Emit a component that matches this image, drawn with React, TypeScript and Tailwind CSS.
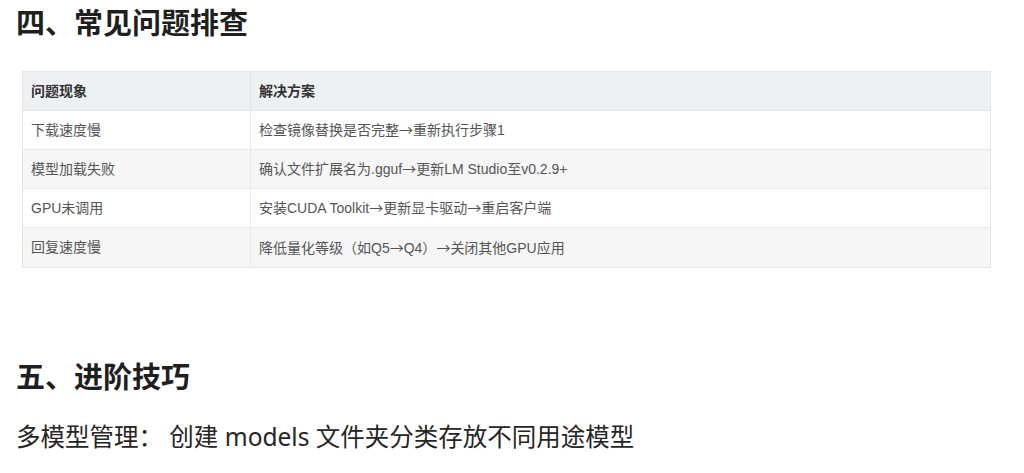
import React from 'react';

const rows = [
  { issue: '下载速度慢', fix: '检查镜像替换是否完整→重新执行步骤1' },
  { issue: '模型加载失败', fix: '确认文件扩展名为.gguf→更新LM Studio至v0.2.9+' },
  { issue: 'GPU未调用', fix: '安装CUDA Toolkit→更新显卡驱动→重启客户端' },
  { issue: '回复速度慢', fix: '降低量化等级（如Q5→Q4）→关闭其他GPU应用' },
];

const tableFont = { fontFamily: '"Liberation Sans", "Noto Sans CJK SC", sans-serif' };
const bodyFont = { fontFamily: '"Noto Sans", "Noto Sans CJK SC", sans-serif' };
const arrowFont = { fontFamily: '"Noto Sans CJK SC", sans-serif' };

// arrows look like the CJK font's glyph in the original, not Arial's
function WithArrows({ text }: { text: string }) {
  const parts = text.split('→');
  return (
    <>
      {parts.map((p, i) => (
        <React.Fragment key={i}>
          {p}
          {i < parts.length - 1 && <span style={arrowFont}>→</span>}
        </React.Fragment>
      ))}
    </>
  );
}

export default function App() {
  return (
    <div className="w-[1024px] h-[473px] overflow-hidden bg-white px-4" style={bodyFont}>
      <h2 className="h-[46px] leading-[46px] text-[29px] font-bold text-[#1f1f1f]">四、常见问题排查</h2>

      {/* Troubleshooting table */}
      <div className="mt-[25px] ml-[6px] w-[969px] border border-[#e4e6e8] text-[14px]" style={tableFont}>
        <div className="flex h-[39px] bg-[#edf1f4] border-b border-[#e2e5e8] font-bold text-[#333]">
          <div className="w-[228px] pl-2 flex items-center border-r border-[#e2e5e8]">问题现象</div>
          <div className="flex-1 pl-2 flex items-center">解决方案</div>
        </div>
        {rows.map((r, i) => (
          <div
            key={i}
            className={`flex h-[39px] text-[#555] ${i < rows.length - 1 ? 'border-b border-[#e8e8e8]' : ''} ${i % 2 === 1 ? 'bg-[#f6f6f6]' : 'bg-white'}`}
          >
            <div className="w-[228px] pl-2 flex items-center border-r border-[#e8e8e8]">{r.issue}</div>
            <div className="flex-1 pl-2 flex items-center">
              <span><WithArrows text={r.fix} /></span>
            </div>
          </div>
        ))}
      </div>

      <h2 className="mt-[86px] h-[46px] leading-[46px] text-[29px] font-bold text-[#1f1f1f]">五、进阶技巧</h2>
      <p className="mt-[19px] h-[36px] leading-[36px] text-[24.5px] text-[#262626]">
        多模型管理： 创建 models 文件夹分类存放不同用途模型
      </p>
    </div>
  );
}
